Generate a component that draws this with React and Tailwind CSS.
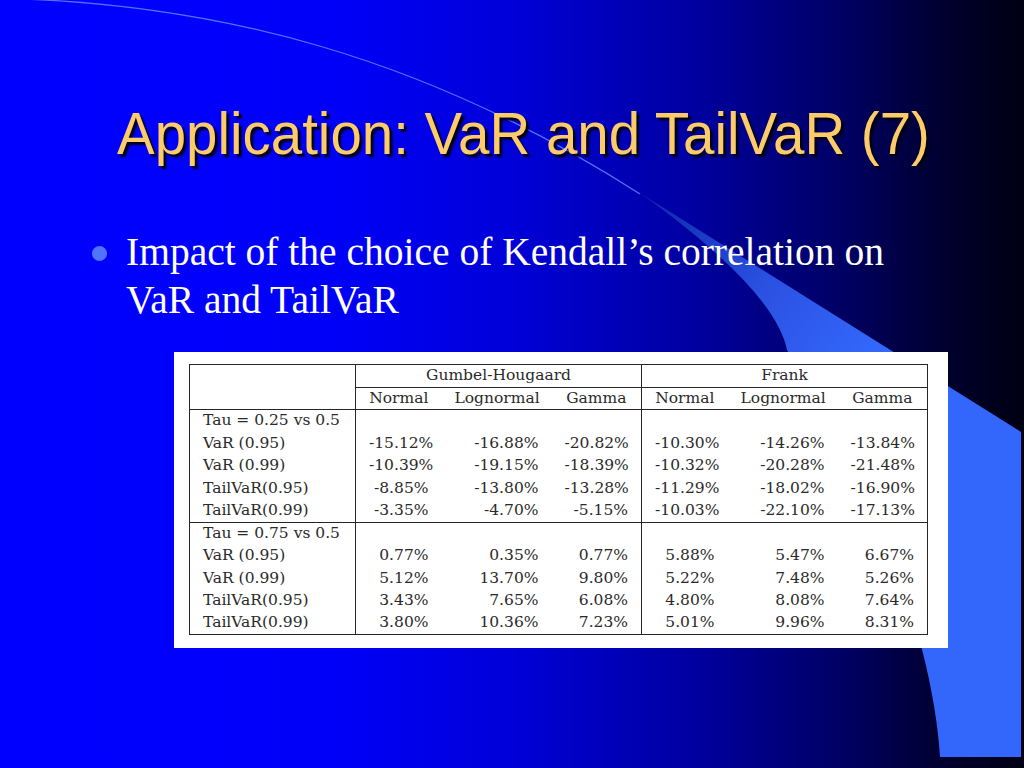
import React from 'react';

const groups = [
  {
    title: 'Tau = 0.25 vs 0.5',
    rows: [
      ['VaR (0.95)', '-15.12%', '-16.88%', '-20.82%', '-10.30%', '-14.26%', '-13.84%'],
      ['VaR (0.99)', '-10.39%', '-19.15%', '-18.39%', '-10.32%', '-20.28%', '-21.48%'],
      ['TailVaR(0.95)', '-8.85%', '-13.80%', '-13.28%', '-11.29%', '-18.02%', '-16.90%'],
      ['TailVaR(0.99)', '-3.35%', '-4.70%', '-5.15%', '-10.03%', '-22.10%', '-17.13%'],
    ],
  },
  {
    title: 'Tau = 0.75 vs 0.5',
    rows: [
      ['VaR (0.95)', '0.77%', '0.35%', '0.77%', '5.88%', '5.47%', '6.67%'],
      ['VaR (0.99)', '5.12%', '13.70%', '9.80%', '5.22%', '7.48%', '5.26%'],
      ['TailVaR(0.95)', '3.43%', '7.65%', '6.08%', '4.80%', '8.08%', '7.64%'],
      ['TailVaR(0.99)', '3.80%', '10.36%', '7.23%', '5.01%', '9.96%', '8.31%'],
    ],
  },
];

const margins = ['Normal', 'Lognormal', 'Gamma'];

function Backdrop() {
  return (
    <svg className="absolute inset-0" width="1024" height="768" viewBox="0 0 1024 768" aria-hidden>
      <defs>
        <linearGradient id="wedge" gradientUnits="userSpaceOnUse" x1="640" y1="190" x2="860" y2="360">
          <stop offset="0" stopColor="#0e24a8" />
          <stop offset="0.55" stopColor="#2a50e0" />
          <stop offset="1" stopColor="#3366fb" />
        </linearGradient>
      </defs>
      <path d="M-20,-2 C220,0 430,60 640,194" fill="none" stroke="#5f86ff" strokeWidth="1.3" strokeOpacity="0.85" />
      <path
        d="M640,193 L1021,432 L1021,757 L940,757 Q934,660 880,520 L787,350 Q775,290 640,193 Z"
        fill="url(#wedge)"
      />
    </svg>
  );
}

function ResultsTable() {
  const cell = 'h-[22.5px] px-[13px] py-0 leading-none whitespace-nowrap';
  return (
    <div className="ml-[174px] mt-[28px] w-[774px] bg-white pt-[12px] pb-[13px] pl-[15px]">
      <table className="w-[738px] table-fixed border-collapse border border-[#262626] font-['DejaVu_Serif',serif] text-[15.5px] text-[#2a2a2a]">
        <colgroup>
          <col className="w-[166px]" />
          <col className="w-[86px]" />
          <col className="w-[110px]" />
          <col className="w-[90px]" />
          <col className="w-[86px]" />
          <col className="w-[110px]" />
          <col className="w-[90px]" />
        </colgroup>
        <thead>
          <tr>
            <th className={`${cell} border-r border-[#262626]`} rowSpan={2} />
            <th className={`${cell} border-r border-b border-[#262626] text-center font-normal`} colSpan={3}>
              Gumbel-Hougaard
            </th>
            <th className={`${cell} border-b border-[#262626] text-center font-normal`} colSpan={3}>
              Frank
            </th>
          </tr>
          <tr className="border-b border-[#262626]">
            {[...margins, ...margins].map((m, i) => (
              <th
                key={i}
                className={`${cell} text-center font-normal ${i === 2 ? 'border-r border-[#262626]' : ''}`}
              >
                {m}
              </th>
            ))}
          </tr>
        </thead>
        {groups.map((g, gi) => (
          <tbody key={gi} className={gi === 0 ? 'border-b border-[#262626]' : ''}>
            <tr>
              <td className={`${cell} border-r border-[#262626] text-left`}>{g.title}</td>
              <td className={cell} />
              <td className={cell} />
              <td className={`${cell} border-r border-[#262626]`} />
              <td className={cell} />
              <td className={cell} />
              <td className={cell} />
            </tr>
            {g.rows.map((r) => (
              <tr key={r[0]}>
                {r.map((v, i) => (
                  <td
                    key={i}
                    className={`${cell} ${i === 0 ? 'text-left' : 'text-right'} ${
                      i === 0 || i === 3 ? 'border-r border-[#262626]' : ''
                    }`}
                  >
                    {v}
                  </td>
                ))}
              </tr>
            ))}
          </tbody>
        ))}
      </table>
    </div>
  );
}

export default function App() {
  return (
    <div className="relative h-[768px] w-[1024px] overflow-hidden bg-[linear-gradient(to_right,#0000ff_0%,#0000fa_32%,#0000d8_50%,#0000a0_68%,#000060_83%,#000030_92%,#000012_100%)]">
      <Backdrop />
      <div className="relative flex flex-col">
        <div className="pl-[117px] pt-[105px]">
          <h1 className="inline-block origin-left scale-x-[0.957] whitespace-nowrap font-['Liberation_Sans',Arial,sans-serif] text-[59px] leading-none font-normal text-[#fdcb68] [text-shadow:3px_3px_2px_#00001a]">
            Application: VaR and TailVaR (7)
          </h1>
        </div>

        <div className="mt-[64px] flex items-start pl-[92px]">
          <span className="mt-[18px] h-[15px] w-[15px] shrink-0 rounded-full bg-[#4f74ff]" />
          <p className="ml-[19px] font-['Liberation_Serif','Times_New_Roman',serif] text-[39.5px] leading-[48px] text-white">
            Impact of the choice of Kendall’s correlation on
            <br />
            VaR and TailVaR
          </p>
        </div>

        <ResultsTable />
      </div>
    </div>
  );
}
